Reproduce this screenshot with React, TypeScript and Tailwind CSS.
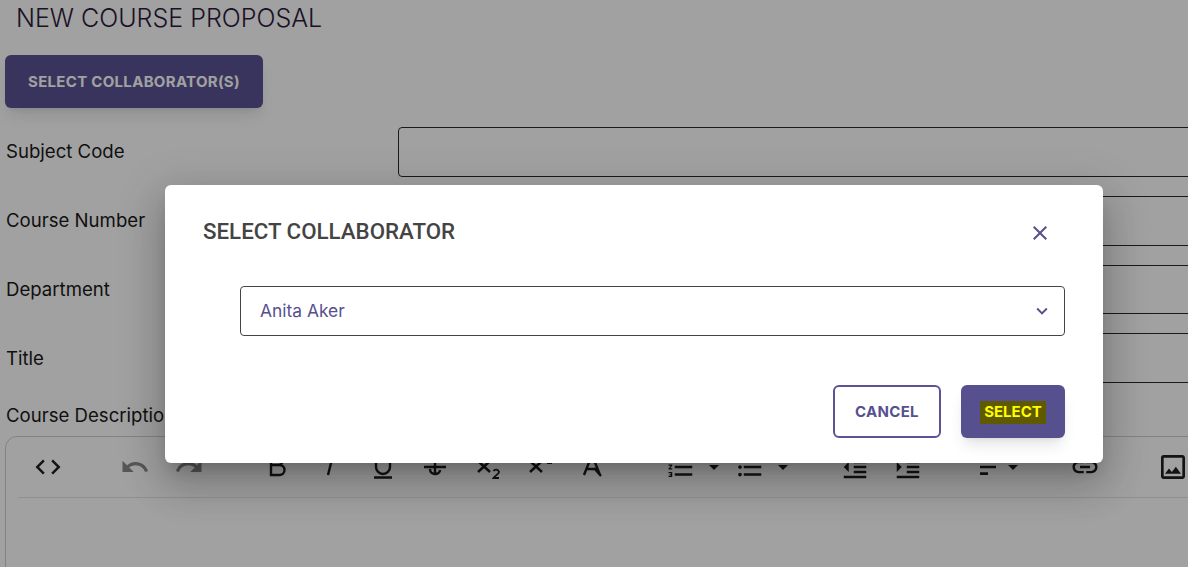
import type { ReactNode } from 'react';
import {
  MdArrowDropDown,
  MdClose,
  MdCode,
  MdExpandMore,
  MdFormatIndentDecrease,
  MdFormatIndentIncrease,
  MdFormatListBulleted,
  MdFormatListNumbered,
  MdLink,
  MdOutlineImage,
  MdRedo,
  MdSort,
  MdUndo,
} from 'react-icons/md';

const fields = ['Subject Code', 'Course Number', 'Department', 'Title'];

const Glyph = ({ d, thin }: { d: string; thin?: string }) => (
  <svg width={32} height={32} viewBox="0 0 32 32" fill="none" stroke="currentColor" strokeWidth="2.4">
    <path d={d} />
    {thin && <path d={thin} strokeWidth="1.8" />}
  </svg>
);

const dark = 'w-[32px] text-[#1f1f1f]';
const faded = 'w-[32px] text-[#8a8a8a]';
const caret = 'w-[24px] text-[#1f1f1f]';

const toolbar: { icon: ReactNode; className: string }[] = [
  { icon: <MdCode size={30} />, className: `ml-[26px] ${dark}` },
  { icon: <MdUndo size={30} />, className: `ml-[55px] ${faded}` },
  { icon: <MdRedo size={30} />, className: `ml-[22px] ${faded}` },
  {
    icon: <Glyph d="M9 4h7a5 5 0 0 1 0 10H9M9 14h8.5a5 5 0 0 1 0 10H9zM9 4v20" />,
    className: `ml-[57px] ${dark}`,
  },
  { icon: <Glyph d="M20 4l-5 20" />, className: `ml-[19px] ${dark}` },
  { icon: <Glyph d="M9 8v8a7 7 0 0 0 14 0V8M7 26.5h18" />, className: `ml-[22px] ${dark}` },
  { icon: <Glyph d="M5 16h22M11 18c0 3.5 2.5 5 5 5s5-1.500 5-4M16 11v12" />, className: `ml-[20px] ${dark}` },
  {
    icon: <Glyph d="M5 10l12 11M17 10L5 21" thin="M20.500 20a3 3 0 0 1 5.500 1c0 2-4 3.500-5.500 6H26" />,
    className: `ml-[22px] ${dark}`,
  },
  {
    icon: <Glyph d="M5 10l12 11M17 10L5 21" thin="M22 12h5M22.500 5a3 3 0 0 1 4.500 2c0 2-3 3-4.500 5" />,
    className: `ml-[20px] ${dark}`,
  },
  { icon: <Glyph d="M7 24 15 4l8 20M10 18h11M17 17l7 8" />, className: `ml-[20px] ${dark}` },
  { icon: <MdFormatListNumbered size={30} />, className: `ml-[56px] ${dark}` },
  { icon: <MdArrowDropDown size={24} />, className: `ml-[5px] ${caret}` },
  { icon: <MdFormatListBulleted size={30} />, className: `ml-[8px] ${dark}` },
  { icon: <MdArrowDropDown size={24} />, className: `ml-[5px] ${caret}` },
  { icon: <MdFormatIndentDecrease size={30} />, className: `ml-[44px] ${dark}` },
  { icon: <MdFormatIndentIncrease size={30} />, className: `ml-[21px] ${dark}` },
  { icon: <MdSort size={32} />, className: `ml-[52px] ${dark}` },
  { icon: <MdArrowDropDown size={24} />, className: `-ml-[7px] ${caret}` },
  { icon: <MdLink size={30} />, className: `ml-[44px] ${dark}` },
  { icon: <MdOutlineImage size={32} />, className: `ml-[56px] ${dark}` },
];

const App = () => {
  return (
    <div className="relative h-[567px] w-[1188px] overflow-hidden bg-white font-['Inter',sans-serif] text-[#1a1a1a]">
      <h1 className="h-[36px] pl-4 text-[25px] leading-[36px] font-light text-[#2c1a3c]">
        NEW COURSE PROPOSAL
      </h1>

      <button className="mt-[19px] ml-[5px] flex h-[53px] w-[258px] items-center justify-center rounded-md bg-[#5b5396] pt-[2px] text-[15px] font-bold tracking-[0.3px] text-white shadow-lg">
        SELECT COLLABORATOR(S)
      </button>

      <div className="mt-[19px]">
        {fields.map((label) => (
          <div key={label} className="mb-[19px] flex h-[49.75px] items-center">
            <span className="w-[398px] shrink-0 pt-[1px] pl-1.5 text-[18.6px]">{label}</span>
            <div className="h-full w-[800px] shrink-0 rounded border border-[#2a2a2a]" />
          </div>
        ))}
      </div>

      <p className="-mt-[1px] pl-1.5 text-[18.6px] leading-[28px]">Course Description</p>

      <div className="mt-[7px] ml-[5px] h-[200px] w-[1200px] rounded-xl border border-[#d0d0d0]">
        <div className="flex h-[60px] items-center">
          {toolbar.map(({ icon, className }, i) => (
            <div key={i} className={`flex shrink-0 items-center justify-center ${className}`}>
              {icon}
            </div>
          ))}
        </div>
        <div className="ml-3 border-t border-[#e4e4e4]" />
      </div>

      <div className="absolute inset-0 bg-black/37" />

      <div className="absolute top-[185px] left-[165px] flex h-[278px] w-[938px] flex-col rounded-md bg-white shadow-[0_11px_15px_-7px_rgba(0,0,0,0.2),0_24px_38px_3px_rgba(0,0,0,0.14),0_9px_46px_8px_rgba(0,0,0,0.12)]">
        <div className="flex h-[102px] items-start justify-between pt-[31px] pr-[51px] pl-[38px]">
          <h2 className="font-['Roboto',sans-serif] text-[22.3px] leading-[30px] font-medium text-[#444444]">
            SELECT COLLABORATOR
          </h2>
          <MdClose size={24} className="mt-[5px] text-[#57508f]" />
        </div>

        <div className="mr-[38px] ml-[75px] -mt-[1px] flex h-[50px] items-center justify-between rounded border border-[#444444] pr-[11px] pl-[19px] text-[#57508f]">
          <span className="text-[17.4px]">Anita Aker</span>
          <MdExpandMore size={22} />
        </div>

        <div className="mt-[49px] mr-[38px] flex justify-end gap-5">
          <button className="flex h-[53px] w-[108px] items-center justify-center rounded-md border-2 border-[#5b5396] pt-[2px] text-[15px] font-bold tracking-[0.3px] text-[#57508f]">
            CANCEL
          </button>
          <button className="flex h-[53px] w-[104px] items-center justify-center rounded-md bg-[#57508f] pt-[2px] text-[15px] font-bold shadow-lg">
            <span className="bg-[#5f5a00] px-[4px] text-[#ffff00]">SELECT</span>
          </button>
        </div>
      </div>
    </div>
  );
};

export default App;
